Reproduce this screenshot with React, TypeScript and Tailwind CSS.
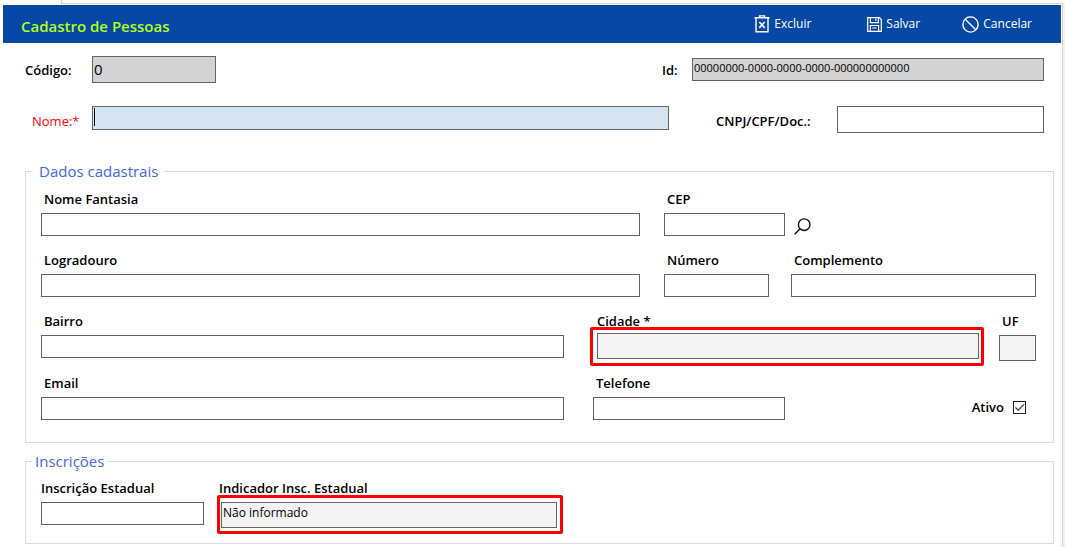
import type { InputHTMLAttributes, ReactNode } from "react";

const boxClass = "block h-[23px] w-full border border-[#646464] bg-white px-0.5 text-xs outline-none";
const labelClass = "block text-[13px] leading-4 font-[550] whitespace-nowrap text-black";

type FieldProps = {
  id: string;
  label: string;
  className?: string;
  labelPad?: string;
};

function Field({ id, label, className = "", labelPad = "pl-[3px]" }: FieldProps) {
  return (
    <div className={`flex flex-col gap-1.5 ${className}`}>
      <label htmlFor={id} className={`${labelClass} ${labelPad}`}>{label}</label>
      <input id={id} type="text" className={boxClass} />
    </div>
  );
}

function ReadOnlyBox(props: InputHTMLAttributes<HTMLInputElement>) {
  return (
    <input
      type="text"
      readOnly
      className="block h-[26px] w-full border border-[#646464] bg-[#f4f4f4] px-px pb-1.5 text-xs text-black outline-none"
      {...props}
    />
  );
}

function Group({ title, legendClass, className, children }: { title: string; legendClass: string; className: string; children: ReactNode }) {
  return (
    <fieldset className={`min-w-0 border border-[#dcdcdc] px-[15px] ${className}`}>
      <legend className={`text-[15px] leading-5 text-[#4169e1] ${legendClass}`}>{title}</legend>
      {children}
    </fieldset>
  );
}

function HeaderButton({ icon, children, className = "" }: { icon: ReactNode; children: string; className?: string }) {
  return (
    <button type="button" className={`flex items-center gap-1 text-xs leading-4 text-white ${className}`}>
      {icon}
      <span>{children}</span>
    </button>
  );
}

function TrashIcon() {
  return (
    <svg width="16" height="18" viewBox="0 0 16 18" fill="none" stroke="#fff" strokeWidth="1.4" aria-hidden="true">
      <path d="M0.5 2.7H15.5M5.5 2.5V0.9H10.5V2.5M2 3V16.8H14V3" />
      <path d="M5.3 7L10.7 12.8M10.7 7L5.3 12.8" strokeWidth="1.7" />
    </svg>
  );
}

function SaveIcon() {
  return (
    <svg width="15" height="15" viewBox="0 0 15 15" fill="none" stroke="#fff" strokeWidth="1.2" aria-hidden="true">
      <path d="M0.7 0.7H12.4L14.3 2.6V14.3H0.7Z" />
      <path d="M3.4 0.7V5.6H11.4V0.7M8.8 1.8V4M3.4 14V8.5H11.6V14M5.3 11H9.7" />
    </svg>
  );
}

function CancelIcon() {
  return (
    <svg width="17" height="17" viewBox="0 0 17 17" fill="none" stroke="#fff" strokeWidth="1.4" aria-hidden="true">
      <circle cx="8.5" cy="8.5" r="7.6" />
      <path d="M3.2 3.2L13.8 13.8" />
    </svg>
  );
}

function SearchIcon() {
  return (
    <svg width="17" height="17" viewBox="0 0 17 17" fill="none" stroke="#111" strokeWidth="1.4" aria-hidden="true">
      <circle cx="10.2" cy="6.7" r="5.8" />
      <path d="M6.1 10.8L0.6 16.3" />
    </svg>
  );
}

export default function App() {
  return (
    <div className="flex min-h-screen flex-col bg-white font-['Open_Sans','Noto_Sans',sans-serif] text-black">
      <div className="h-[3px] pl-[61px]">
        <div className="h-full border-l border-[#d3d3d3]" />
      </div>
      <div className="flex grow bg-[#f0f0f0] pr-0.5">
        <main className="min-w-0 grow border-r border-[#d3d3d3] bg-white">
          <div className="mb-px ml-[61px] h-px bg-[#d3d3d3]" />
          <header className="mr-px ml-[3px] flex h-[38px] items-center bg-[#0748a6] pr-[29px] pl-[18px]">
            <h1 className="grow pt-1 text-[15px] leading-5 font-semibold text-[#b0ff16]">Cadastro de Pessoas</h1>
            <HeaderButton icon={<TrashIcon />} className="w-[113px]">Excluir</HeaderButton>
            <HeaderButton icon={<SaveIcon />} className="w-[95px]">Salvar</HeaderButton>
            <HeaderButton icon={<CancelIcon />}>Cancelar</HeaderButton>
          </header>

          <form className="flex flex-col pt-[13px] pr-2 pl-[25px]">
            <div className="flex items-center pr-2.5">
              <label htmlFor="codigo" className={`${labelClass} w-[67px]`}>Código:</label>
              <input
                id="codigo"
                type="text"
                readOnly
                defaultValue="0"
                className="h-[27px] w-[124px] border border-[#646464] bg-[#d3d3d3] px-px pb-0.5 text-[15px] outline-none"
              />
              <label htmlFor="id" className={`${labelClass} ml-auto w-[30px]`}>Id:</label>
              <input
                id="id"
                type="text"
                readOnly
                defaultValue="00000000-0000-0000-0000-000000000000"
                className="h-[23px] w-[352px] border border-[#646464] bg-[#d3d3d3] px-px pb-1 text-[11px] outline-none"
              />
            </div>

            <div className="mt-[23px] flex items-start pr-2.5">
              <label htmlFor="nome" className="w-[67px] pt-[7px] pl-[7px] text-[13px] leading-4 font-medium text-[#ff0000]">Nome:*</label>
              <div className="relative min-w-0 grow">
                <input id="nome" type="text" className="block h-6 w-full border border-[#646464] bg-[#d6e3f1] px-0.5 text-base outline-none" />
                <span className="absolute top-0.5 left-0.5 h-[18px] w-px bg-black" />
              </div>
              <label htmlFor="documento" className={`${labelClass} ml-[47px] w-[121px] pt-[7px]`}>CNPJ/CPF/Doc.:</label>
              <input id="documento" type="text" className="h-[27px] w-[207px] border border-[#646464] bg-white px-0.5 text-xs outline-none" />
            </div>

            <Group title="Dados cadastrais" legendClass="-ml-[9px] pr-1.5 pl-[7px]" className="mt-7 pr-[17px] pb-[22px]">
              <div className="flex flex-col pt-2.5">
                <div className="flex gap-6">
                  <Field id="fantasia" label="Nome Fantasia" className="grow" />
                  <div className="flex w-[372px] items-end gap-[9px]">
                    <Field id="cep" label="CEP" className="w-[121px]" />
                    <button type="button" aria-label="Buscar CEP" className="pb-px"><SearchIcon /></button>
                  </div>
                </div>

                <div className="mt-4 flex gap-6">
                  <Field id="logradouro" label="Logradouro" className="grow" />
                  <div className="flex w-[372px] gap-[22px]">
                    <Field id="numero" label="Número" className="w-[105px]" />
                    <Field id="complemento" label="Complemento" className="grow" />
                  </div>
                </div>

                <div className="mt-4 flex">
                  <Field id="bairro" label="Bairro" className="grow" />
                  <div className="ml-[33px] flex w-[382px] flex-col gap-1">
                    <label htmlFor="cidade" className={labelClass}>Cidade *</label>
                    <div className="relative">
                      <ReadOnlyBox id="cidade" />
                      <span className="pointer-events-none absolute -top-1.5 -right-[5px] -bottom-[7px] -left-[7px] rounded-xs border-3 border-[#ff0000]" />
                    </div>
                  </div>
                  <div className="ml-5 flex w-[37px] flex-col gap-1.5">
                    <label htmlFor="uf" className={`${labelClass} pl-[3px]`}>UF</label>
                    <ReadOnlyBox id="uf" />
                  </div>
                </div>

                <div className="mt-3.5 flex">
                  <Field id="email" label="Email" className="grow" />
                  <div className="ml-[29px] flex w-[443px] items-end justify-between pr-2.5">
                    <Field id="telefone" label="Telefone" className="w-[192px]" />
                    <label className="flex items-center gap-[9px] pb-[5px] text-[13px] leading-4 font-[550]">
                      Ativo
                      <span className="relative block size-[13px]">
                        <input type="checkbox" defaultChecked className="block size-[13px] appearance-none border border-[#222]" />
                        <svg className="pointer-events-none absolute inset-0" width="13" height="13" viewBox="0 0 13 13" fill="none" stroke="#333" strokeWidth="1.2" aria-hidden="true">
                          <path d="M2.5 6.5L5.2 9.2L11 3.4" />
                        </svg>
                      </span>
                    </label>
                  </div>
                </div>
              </div>
            </Group>

            <Group title="Inscrições" legendClass="-ml-[9px] pr-[3px] pl-[3px]" className="mt-2 pb-[15px]">
              <div className="flex gap-[17px] pt-[9px]">
                <Field id="inscricao" label="Inscrição Estadual" className="w-[163px]" labelPad="pl-0" />
                <div className="flex w-[336px] flex-col gap-1.5">
                  <label htmlFor="indicador" className="-ml-0.5 block text-[13px] leading-4 font-semibold">Indicador Insc. Estadual</label>
                  <div className="relative">
                    <ReadOnlyBox id="indicador" defaultValue="Não informado" />
                    <span className="pointer-events-none absolute -top-[7px] -right-1.5 -bottom-1.5 -left-1 rounded-xs border-3 border-[#ff0000]" />
                  </div>
                </div>
              </div>
            </Group>
          </form>
        </main>
      </div>
    </div>
  );
}
